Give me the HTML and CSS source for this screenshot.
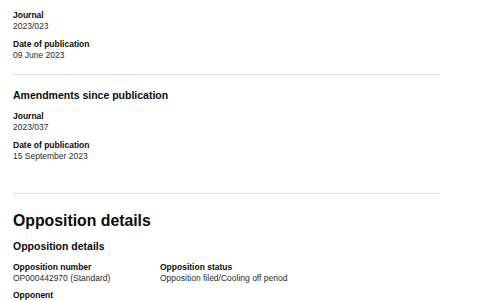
FILE: index.html
```html
<!DOCTYPE html>
<html lang="en">
<head>
<meta charset="utf-8">
<title>Trade mark details</title>
<link rel="stylesheet" href="styles.css">
</head>
<body>
<main class="page">
  <section class="section first">
    <dl class="list">
      <div class="item"><dt>Journal</dt><dd>2023/023</dd></div>
      <div class="item"><dt>Date of publication</dt><dd>09 June 2023</dd></div>
    </dl>
  </section>
  <hr class="rule rule-a">
  <section class="section">
    <h3 class="subhead">Amendments since publication</h3>
    <dl class="list">
      <div class="item"><dt>Journal</dt><dd>2023/037</dd></div>
      <div class="item"><dt>Date of publication</dt><dd>15 September 2023</dd></div>
    </dl>
  </section>
  <hr class="rule rule-b">
  <section class="section">
    <h2 class="bighead">Opposition details</h2>
    <h3 class="subhead sub2">Opposition details</h3>
    <dl class="list grid">
      <div class="item"><dt>Opposition number</dt><dd>OP000442970 (Standard)</dd></div>
      <div class="item"><dt>Opposition status</dt><dd>Opposition filed/Cooling off period</dd></div>
      <div class="item full"><dt>Opponent</dt><dd>&nbsp;</dd></div>
    </dl>
  </section>
</main>
</body>
</html>
```
FILE: styles.css
```css
* { box-sizing: border-box; }
html, body { margin: 0; padding: 0; background: #ffffff; }
body {
  font-family: "Liberation Sans", Arial, sans-serif;
  color: #0b0c0c;
}
.page {
  width: 427px;
  margin-left: 13px;
  padding-top: 10px;
}
.list { margin: 0; }
.item { margin-bottom: 7px; }
.item:last-child { margin-bottom: 0; }
dt {
  font-size: 8.5px;
  line-height: 11px;
  font-weight: bold;
}
dd {
  margin: 0;
  font-size: 8.5px;
  line-height: 11px;
  color: #2b2c2c;
}
.rule {
  border: 0;
  height: 1px;
  background: #dcdcdc;
  margin: 0;
}
.rule-a { margin-top: 13px; }
.rule-b { margin-top: 31px; }
.subhead {
  margin: 13px 0 9px;
  font-size: 10.5px;
  line-height: 14px;
  font-weight: bold;
}
.bighead {
  margin: 17px 0 0;
  font-size: 15.8px;
  line-height: 20px;
  font-weight: bold;
}
.sub2 { margin-top: 8px; }
.grid {
  display: grid;
  grid-template-columns: 133px 1fr;
  column-gap: 14px;
  row-gap: 6px;
}
.grid .item { margin: 0; }
.grid .full { grid-column: 1 / -1; }
```
